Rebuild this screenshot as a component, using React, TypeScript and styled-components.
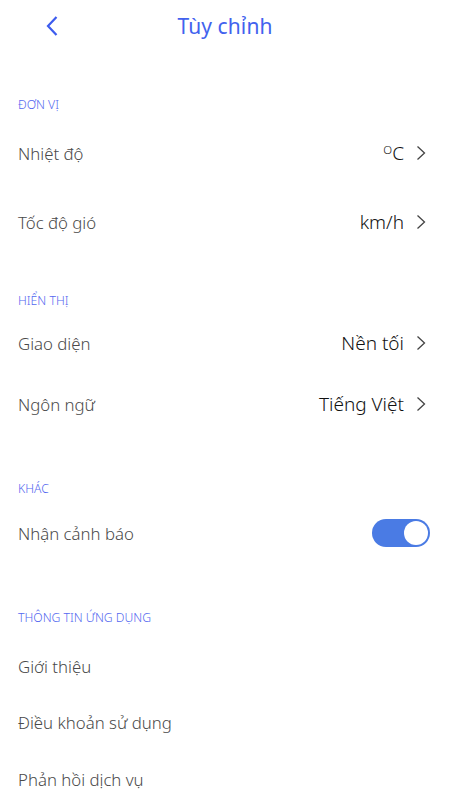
import React from "react";
import styled, { createGlobalStyle } from "styled-components";

const Global = createGlobalStyle`
  html, body { margin: 0; padding: 0; background: #ffffff; }
  body { font-family: "Noto Sans", "Open Sans", sans-serif; -webkit-font-smoothing: antialiased; }
  * { box-sizing: border-box; }
`;

const Page = styled.div`
  width: 450px;
  min-height: 800px;
  background: #fff;
  display: flex;
  flex-direction: column;
  overflow: hidden;
`;

const TopBar = styled.header`
  height: 52px;
  display: grid;
  grid-template-columns: 100px 1fr 100px;
  align-items: center;
`;

const BackButton = styled.button`
  border: none;
  background: none;
  padding: 0 0 0 45px;
  height: 52px;
  display: flex;
  align-items: center;
  cursor: pointer;
`;

const Title = styled.h1`
  margin: 0;
  text-align: center;
  font-size: 21px;
  font-weight: 400;
  color: #4262ee;
  letter-spacing: 0.1px;
`;

const SectionTitle = styled.div<{ $mt: number }>`
  margin-top: ${(p) => p.$mt}px;
  height: 16px;
  line-height: 16px;
  padding-left: 18px;
  font-size: 12.2px;
  font-weight: 300;
  color: #5468f0;
  text-transform: uppercase;
`;

const Row = styled.div<{ $h: number }>`
  height: ${(p) => p.$h}px;
  display: flex;
  align-items: center;
  justify-content: space-between;
  padding: 0 24px 0 18px;
`;

const Label = styled.span`
  font-size: 16.8px;
  font-weight: 300;
  color: #4a4a4a;
`;

const ValueWrap = styled.span`
  display: flex;
  align-items: center;
  gap: 12px;
`;

const Value = styled.span`
  font-size: 19px;
  font-weight: 300;
  color: #111;
`;

const Deg = styled.span`
  font-size: 11.5px;
  position: relative;
  top: -6px;
`;

const Toggle = styled.div`
  width: 58px;
  height: 28px;
  border-radius: 14px;
  background: #4a7be4;
  display: flex;
  align-items: center;
  justify-content: flex-end;
  padding: 0 2px;
  margin-right: -4px;
`;

const Knob = styled.div`
  width: 24px;
  height: 24px;
  border-radius: 50%;
  background: #fff;
`;

const Chevron = () => (
  <svg width="10" height="16" viewBox="0 0 10 16">
    <path d="M1.5 1.5 L8.5 8 L1.5 14.5" fill="none" stroke="#444" strokeWidth="1.3" />
  </svg>
);

const BackIcon = () => (
  <svg width="14" height="22" viewBox="0 0 14 22">
    <path d="M11.5 2 L3 11 L11.5 20" fill="none" stroke="#3d5cee" strokeWidth="2.2" />
  </svg>
);

type Item = { label: string; value?: React.ReactNode; h: number; toggle?: boolean };

const NavRow = ({ item }: { item: Item }) => (
  <Row $h={item.h}>
    <Label>{item.label}</Label>
    {item.toggle ? (
      <Toggle>
        <Knob />
      </Toggle>
    ) : item.value !== undefined ? (
      <ValueWrap>
        <Value>{item.value}</Value>
        <Chevron />
      </ValueWrap>
    ) : null}
  </Row>
);

const sections: { title: string; mt: number; items: Item[] }[] = [
  {
    title: "Đơn vị",
    mt: 45,
    items: [
      { label: "Nhiệt độ", value: (<><Deg>O</Deg>C</>), h: 80 },
      { label: "Tốc độ gió", value: "km/h", h: 58 },
    ],
  },
  {
    title: "Hiển thị",
    mt: 42,
    items: [
      { label: "Giao diện", value: "Nền tối", h: 68 },
      { label: "Ngôn ngữ", value: "Tiếng Việt", h: 54 },
    ],
  },
  {
    title: "Khác",
    mt: 50,
    items: [{ label: "Nhận cảnh báo", toggle: true, h: 72 }],
  },
  {
    title: "Thông tin ứng dụng",
    mt: 41,
    items: [
      { label: "Giới thiệu", h: 80 },
      { label: "Điều khoản sử dụng", h: 32 },
      { label: "Phản hồi dịch vụ", h: 82 },
    ],
  },
];

export default function App() {
  return (
    <Page>
      <Global />
      <TopBar>
        <BackButton aria-label="back">
          <BackIcon />
        </BackButton>
        <Title>Tùy chỉnh</Title>
        <span />
      </TopBar>
      {sections.map((s) => (
        <section key={s.title}>
          <SectionTitle $mt={s.mt}>{s.title}</SectionTitle>
          {s.items.map((it) => (
            <NavRow key={it.label} item={it} />
          ))}
        </section>
      ))}
    </Page>
  );
}
